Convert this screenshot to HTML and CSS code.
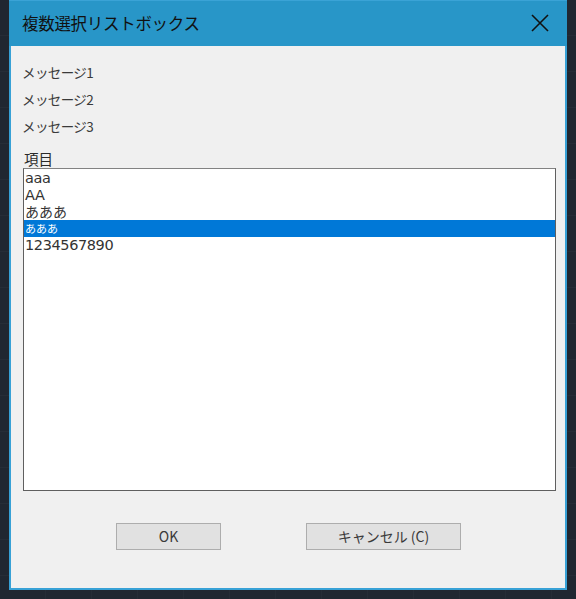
FILE: index.html
```html
<!DOCTYPE html>
<html lang="ja">
<head>
<meta charset="utf-8">
<title>複数選択リストボックス</title>
<link rel="stylesheet" href="styles.css">
</head>
<body>
<div class="desktop">
  <div class="window">
    <div class="titlebar">
      <span class="title">複数選択リストボックス</span>
      <svg class="close" width="18" height="18" viewBox="0 0 18 18">
        <path d="M1 1 L17 17 M17 1 L1 17" stroke="#111" stroke-width="1.6" fill="none"/>
      </svg>
    </div>
    <div class="content">
      <div class="messages">
        <div class="msg">メッセージ1</div>
        <div class="msg">メッセージ2</div>
        <div class="msg">メッセージ3</div>
      </div>
      <div class="label">項目</div>
      <div class="listbox">
        <div class="item">aaa</div>
        <div class="item">AA</div>
        <div class="item cjk">あああ</div>
        <div class="item selected">あああ</div>
        <div class="item">1234567890</div>
      </div>
      <div class="buttons">
        <div class="btn btn-ok">OK</div>
        <div class="btn btn-cancel">キャンセル (C)</div>
      </div>
    </div>
  </div>
</div>
</body>
</html>
```

FILE: styles.css
```css
html, body {
  margin: 0;
  padding: 0;
}
body {
  width: 576px;
  height: 599px;
  overflow: hidden;
  background: #202731;
}
.desktop {
  width: 576px;
  height: 599px;
  background-color: #202731;
  background-image:
    repeating-linear-gradient(to bottom, transparent 0, transparent 35px, #262d37 35px, #262d37 36px),
    repeating-linear-gradient(to right, transparent 0, transparent 45px, #252c36 45px, #252c36 46px);
  font-family: "Noto Sans CJK JP", "Noto Sans", sans-serif;
}
.window {
  margin-left: 9px;
  width: 558px;
  height: 590px;
  box-sizing: border-box;
  border: 2px solid #37a1d6;
  border-top: none;
  background: #f0f0f0;
  display: flex;
  flex-direction: column;
}
.titlebar {
  height: 46px;
  margin: 0 -2px;
  background: #2896c8;
  border-top: 1px solid #3aa3d6;
  box-sizing: border-box;
  display: flex;
  align-items: center;
  justify-content: space-between;
  padding: 0 18px 0 13px;
  flex-shrink: 0;
}
.title {
  font-size: 16.5px;
  color: #111;
  letter-spacing: -0.3px;
  padding-bottom: 2px;
}
.close {
  display: block;
  margin-bottom: 1px;
}
.content {
  padding: 13px 9px 0 11px;
  display: flex;
  flex-direction: column;
}
.msg {
  font-size: 13.5px;
  line-height: 27px;
  height: 27px;
  color: #3a3a3a;
  letter-spacing: -0.6px;
}
.label {
  margin-top: 10px;
  font-size: 14.5px;
  line-height: 17px;
  height: 17px;
  color: #2a2a2a;
  padding-left: 2px;
}
.listbox {
  margin-top: 1px;
  margin-left: 1px;
  height: 323px;
  box-sizing: border-box;
  border: 1px solid #5f5f5f;
  border-top-color: #828282;
  background: #fff;
  padding-top: 1px;
}
.item {
  height: 16.7px;
  line-height: 16.7px;
  font-family: "DejaVu Sans", "Noto Sans CJK JP", sans-serif;
  font-size: 14.5px;
  letter-spacing: -0.4px;
  color: #333;
  padding-left: 1px;
  white-space: nowrap;
}
.item.cjk {
  font-family: "Noto Sans CJK JP", sans-serif;
  font-size: 14px;
  letter-spacing: 0;
}
.item.selected {
  background: #0078d7;
  color: #fff;
  font-family: "Noto Sans CJK JP", sans-serif;
  font-size: 11px;
  letter-spacing: 0;
  height: 17px;
  line-height: 17px;
}
.buttons {
  margin-top: 32px;
  display: flex;
  padding-left: 94px;
  gap: 85px;
}
.btn {
  height: 27px;
  box-sizing: border-box;
  border: 1px solid #adadad;
  background: #e1e1e1;
  color: #3a3a3a;
  font-size: 14px;
  line-height: 25px;
  text-align: center;
  font-family: "Noto Sans CJK JP", sans-serif;
}
.btn-ok {
  width: 105px;
}
.btn-cancel {
  width: 155px;
}
```
